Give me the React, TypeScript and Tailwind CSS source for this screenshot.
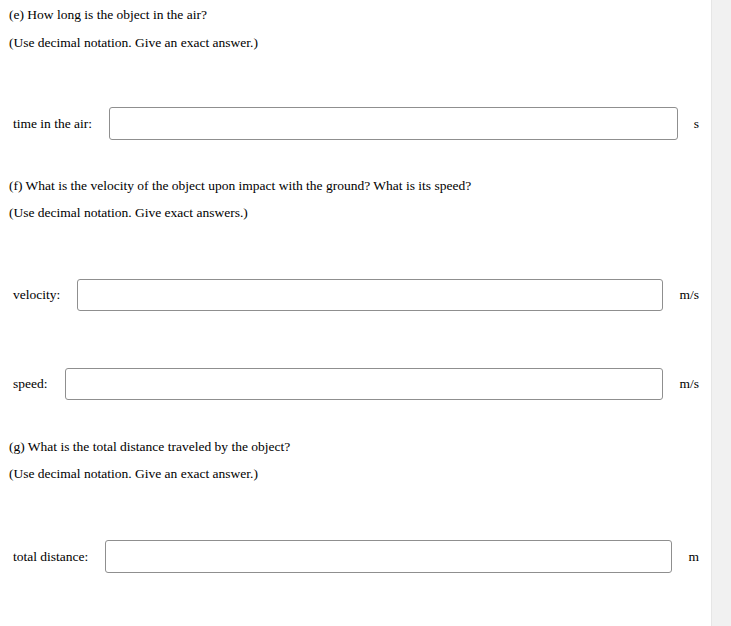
import React from "react"

type RowProps = { label: string; unit: string; h?: string }

function AnswerRow({ label, unit, h = "h-[33px]" }: RowProps) {
  return (
    <div className="flex items-center pl-[13px] pr-[12px]">
      <span className="whitespace-nowrap">{label}</span>
      <input
        type="text"
        className={`ml-[17px] flex-1 ${h} rounded-[3px] border border-[#8f8f8f] bg-white outline-none`}
      />
      <span className="ml-[16px] whitespace-nowrap">{unit}</span>
    </div>
  )
}

export default function App() {
  return (
    <div className="flex h-[626px] w-[731px] bg-white font-['Liberation_Serif',serif] text-[13.5px] leading-[16px] text-black">
      <div className="flex-1">
        <p className="pl-[9px] pt-[7px]">(e) How long is the object in the air?</p>
        <p className="mt-[12px] pl-[9px]">(Use decimal notation. Give an exact answer.)</p>

        <div className="mt-[56px]">
          <AnswerRow label="time in the air:" unit="s" />
        </div>

        <p className="mt-[38px] pl-[9px]">
          (f) What is the velocity of the object upon impact with the ground? What is its speed?
        </p>
        <p className="mt-[11px] pl-[9px]">(Use decimal notation. Give exact answers.)</p>

        <div className="mt-[58px]">
          <AnswerRow label="velocity:" unit="m/s" h="h-[32px]" />
        </div>
        <div className="mt-[57px]">
          <AnswerRow label="speed:" unit="m/s" h="h-[32px]" />
        </div>

        <p className="mt-[39px] pl-[9px]">(g) What is the total distance traveled by the object?</p>
        <p className="mt-[11px] pl-[9px]">(Use decimal notation. Give an exact answer.)</p>

        <div className="mt-[58px]">
          <AnswerRow label="total distance:" unit="m" />
        </div>
      </div>
      <div className="w-[20px] border-l border-[#e6e6e6] bg-[#f1f1f1]" />
    </div>
  )
}
